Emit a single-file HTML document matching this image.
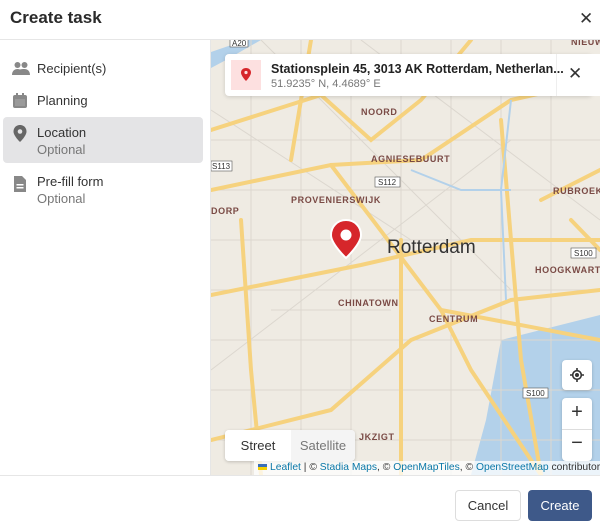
<!DOCTYPE html>
<html><head><meta charset="utf-8"><style>
*{box-sizing:border-box;margin:0;padding:0}
body{width:600px;height:529px;overflow:hidden;background:#fff;font-family:"Liberation Sans",Arial,sans-serif;color:#222;position:relative}
.hdr{position:absolute;left:0;top:0;width:600px;height:40px;border-bottom:1px solid #e6e6e6}
.hdr h1{position:absolute;left:10px;top:8px;font-size:17px;font-weight:bold;color:#2a2a2a}
.hdr .x{position:absolute;left:579px;top:9px;font-size:17px;color:#333}
.side{position:absolute;left:0;top:40px;width:211px;height:435px;border-right:1px solid #e6e6e6}
.it{position:absolute;left:3px;width:200px;font-size:13px;color:#333}
.it .t{position:absolute;left:34px}
.it .s{position:absolute;left:34px;top:17px;color:#777}
.it svg{position:absolute;left:9px}
.sel{background:#e4e4e6;border-radius:4px}
.map{position:absolute;left:211px;top:40px;width:389px;height:435px;overflow:hidden;background:#efebe3}
.card{position:absolute;left:14px;top:14px;width:367px;height:42px;background:#fff;border-radius:4px;box-shadow:0 1px 4px rgba(0,0,0,.15)}
.btn{position:absolute;background:#fff;border-radius:4px;box-shadow:0 1px 3px rgba(0,0,0,.2)}
.foot{position:absolute;left:0;top:475px;width:600px;height:54px;border-top:1px solid #e6e6e6}
</style></head><body>
<div class="hdr"><h1>Create task</h1><div class="x">✕</div></div>
<div class="side">
 <div class="it" style="top:21px;height:18px"><svg width="18" height="16" viewBox="0 0 18 16" style="top:0"><circle cx="5.5" cy="4" r="3" fill="#888"/><circle cx="12.5" cy="4" r="3" fill="#888"/><path d="M0 14c0-4 2.5-6 5.5-6s5.5 2 5.5 6z M9 14c0-2 0-4-1-5.5 1-.4 2.5-.5 4.5-.5 3 0 5.5 2 5.5 6z" fill="#888"/></svg><span class="t">Recipient(s)</span></div>
 <div class="it" style="top:53px;height:18px"><svg width="16" height="16" viewBox="0 0 16 16" style="top:0"><rect x="1" y="2" width="14" height="13" rx="2" fill="#888"/><rect x="4" y="0" width="2" height="4" fill="#888"/><rect x="10" y="0" width="2" height="4" fill="#888"/><rect x="3" y="6" width="10" height="7" fill="#9a9a9a"/></svg><span class="t">Planning</span></div>
 <div class="it sel" style="top:77px;height:46px"><svg width="16" height="18" viewBox="0 0 16 18" style="top:8px"><path d="M8 0C4 0 1.5 3 1.5 6.5 1.5 11 8 17 8 17s6.5-6 6.5-10.5C14.5 3 12 0 8 0z" fill="#666"/><circle cx="8" cy="6.5" r="2.3" fill="#e4e4e6"/></svg><span class="t" style="top:8px">Location</span><span class="s" style="top:25px">Optional</span></div>
 <div class="it" style="top:134px;height:40px"><svg width="14" height="18" viewBox="0 0 14 18" style="top:1px;left:10px"><path d="M1 1h8l4 4v12H1z" fill="#888"/><rect x="3.5" y="9" width="7" height="1.5" fill="#fff"/><rect x="3.5" y="12" width="7" height="1.5" fill="#fff"/></svg><span class="t">Pre-fill form</span><span class="s">Optional</span></div>
</div>
<div class="map">
<svg width="389" height="435" viewBox="0 0 389 435" style="position:absolute;left:0;top:0">
<g fill="#b3d1ea">
<path d="M0 12 L35 0 L50 0 L15 20 L0 28z"/>
<path d="M290 300 L389 275 L389 435 L260 435 L275 380z"/>
</g>
<g stroke="#dcd7cf" stroke-width="1" fill="none">
<path d="M0 100h389M0 150h389M0 200h389M0 250h389M0 300h389M0 350h389M0 400h389M40 0v435M90 0v435M140 0v435M190 0v435M240 0v435M290 0v435M340 0v435"/>
<path d="M0 70L200 200M50 0L300 250M150 0L389 180M0 330L300 100M20 40h100M230 40h100M60 270h120"/>
</g>
<g stroke="#f6d27e" stroke-width="4" fill="none" stroke-linecap="round">
<path d="M0 150 L120 125 L210 120 L300 60 L389 40"/>
<path d="M80 120 L100 0"/>
<path d="M120 125 L230 270 L260 330 L330 435"/>
<path d="M0 255 L150 225 L260 200 L389 200"/>
<path d="M30 180 L40 330 L50 435"/>
<path d="M110 55 L160 100 L210 60 L260 0"/>
<path d="M0 400 L120 370 L200 300 L300 260 L389 250"/>
<path d="M290 80 L300 200 L310 320 L330 435"/>
<path d="M190 200 L190 435"/>
<path d="M330 160 L389 130"/>
<path d="M230 270 L389 300"/>
<path d="M360 180 L389 210"/>
<path d="M0 90 L110 55"/>
</g>
<g stroke="#b3d1ea" stroke-width="2" fill="none"><path d="M300 60 L290 150 L295 260"/><path d="M200 130 L250 150 L300 150"/></g>
<g font-family="Liberation Sans,Arial,sans-serif" font-size="9" fill="#7a4a45" letter-spacing=".6" font-weight="bold">
<text x="150" y="75">NOORD</text><text x="160" y="122">AGNIESEBUURT</text><text x="80" y="163">PROVENIERSWIJK</text><text x="0" y="174">DORP</text><text x="127" y="266">CHINATOWN</text><text x="218" y="282">CENTRUM</text><text x="350" y="36">CROOS</text><text x="342" y="154">RUBROEK</text><text x="324" y="233">HOOGKWARTI</text><text x="148" y="400">JKZIGT</text><text x="360" y="5">NIEUW</text></g>
<g font-family="Liberation Sans,Arial,sans-serif" font-size="8" fill="#333">
<rect x="19" y="-2" width="18" height="9" fill="#fff" stroke="#555" stroke-width=".6"/><text x="21" y="6">A20</text>
<rect x="0" y="121" width="21" height="10" fill="#fff" stroke="#555" stroke-width=".6"/><text x="1" y="129">S113</text>
<rect x="164" y="137" width="25" height="10" fill="#fff" stroke="#555" stroke-width=".6"/><text x="167" y="145">S112</text>
<rect x="360" y="208" width="25" height="10" fill="#fff" stroke="#555" stroke-width=".6"/><text x="363" y="216">S100</text>
<rect x="312" y="348" width="25" height="10" fill="#fff" stroke="#555" stroke-width=".6"/><text x="315" y="356">S100</text></g>
<text x="176" y="213" font-family="Liberation Sans,Arial,sans-serif" font-size="19" fill="#333">Rotterdam</text>
<path d="M135 180c-9 0-15 7-15 15 0 9 15 23 15 23s15-14 15-23c0-8-6-15-15-15z" fill="#d6262b" stroke="#fff" stroke-width="2"/><circle cx="135" cy="195" r="5.5" fill="#fff"/>
</svg>
<div class="card">
 <div style="position:absolute;left:6px;top:6px;width:30px;height:30px;background:#fde0e0"><svg width="10" height="13" viewBox="0 0 10 13" style="position:absolute;left:10px;top:8px"><path d="M5 0C2 0 0 2 0 4.5 0 8 5 13 5 13s5-5 5-8.5C10 2 8 0 5 0z" fill="#d6262b"/><circle cx="5" cy="4.5" r="1.6" fill="#fde0e0"/></svg></div>
 <div style="position:absolute;left:46px;top:8px;width:280px;font-size:12.5px;font-weight:bold;color:#222;white-space:nowrap">Stationsplein 45, 3013 AK Rotterdam, Netherlan...</div>
 <div style="position:absolute;left:46px;top:24px;font-size:11px;color:#777">51.9235° N, 4.4689° E</div>
 <div style="position:absolute;left:331px;top:0;width:1px;height:42px;background:#eee"></div>
 <div style="position:absolute;left:338px;top:0;width:43px;height:42px;background:#fff;border-radius:0 4px 4px 0"></div>
 <div style="position:absolute;left:343px;top:10px;font-size:17px;color:#333">✕</div>
</div>
<div class="btn" style="left:351px;top:320px;width:30px;height:30px"><svg width="14" height="14" viewBox="0 0 14 14" style="position:absolute;left:8px;top:8px"><circle cx="7" cy="7" r="4.3" fill="none" stroke="#333" stroke-width="1.6"/><circle cx="7" cy="7" r="2" fill="#333"/><path d="M7 0v2.5M7 11.5V14M0 7h2.5M11.5 7H14" stroke="#333" stroke-width="1.6"/></svg></div>
<div class="btn" style="left:351px;top:358px;width:30px;height:63px"><div style="position:absolute;top:3px;width:30px;text-align:center;font-size:20px;color:#333">+</div><div style="position:absolute;top:31px;left:0;width:30px;height:1px;background:#ddd"></div><div style="position:absolute;top:34px;width:30px;text-align:center;font-size:20px;color:#333">−</div></div>
<div class="btn" style="left:14px;top:390px;width:130px;height:31px;overflow:hidden"><div style="position:absolute;left:0;top:0;width:66px;height:31px;background:#fff;font-size:13px;line-height:31px;text-align:center;color:#333">Street</div><div style="position:absolute;left:66px;top:0;width:64px;height:31px;background:#f4f4f4;font-size:13px;line-height:31px;text-align:center;color:#777">Satellite</div></div>
<div style="position:absolute;left:43px;top:421px;width:346px;height:14px;background:rgba(255,255,255,.75);font-size:10.3px;line-height:14px;color:#333;white-space:nowrap;padding-left:4px"><span style="display:inline-block;width:9px;height:6px;background:linear-gradient(#3a6fb8 50%,#f5d000 50%);margin-right:3px"></span><span style="color:#0a78a8">Leaflet</span> | © <span style="color:#0a78a8">Stadia Maps</span>, © <span style="color:#0a78a8">OpenMapTiles</span>, © <span style="color:#0a78a8">OpenStreetMap</span> contributors</div>
</div>
<div class="foot">
 <div style="position:absolute;left:455px;top:14px;width:66px;height:31px;border:1px solid #ddd;border-radius:4px;font-size:13px;line-height:29px;text-align:center;color:#333">Cancel</div>
 <div style="position:absolute;left:528px;top:14px;width:64px;height:31px;background:#3e5989;border-radius:4px;font-size:13px;line-height:31px;text-align:center;color:#fff">Create</div>
</div>
</body></html>
